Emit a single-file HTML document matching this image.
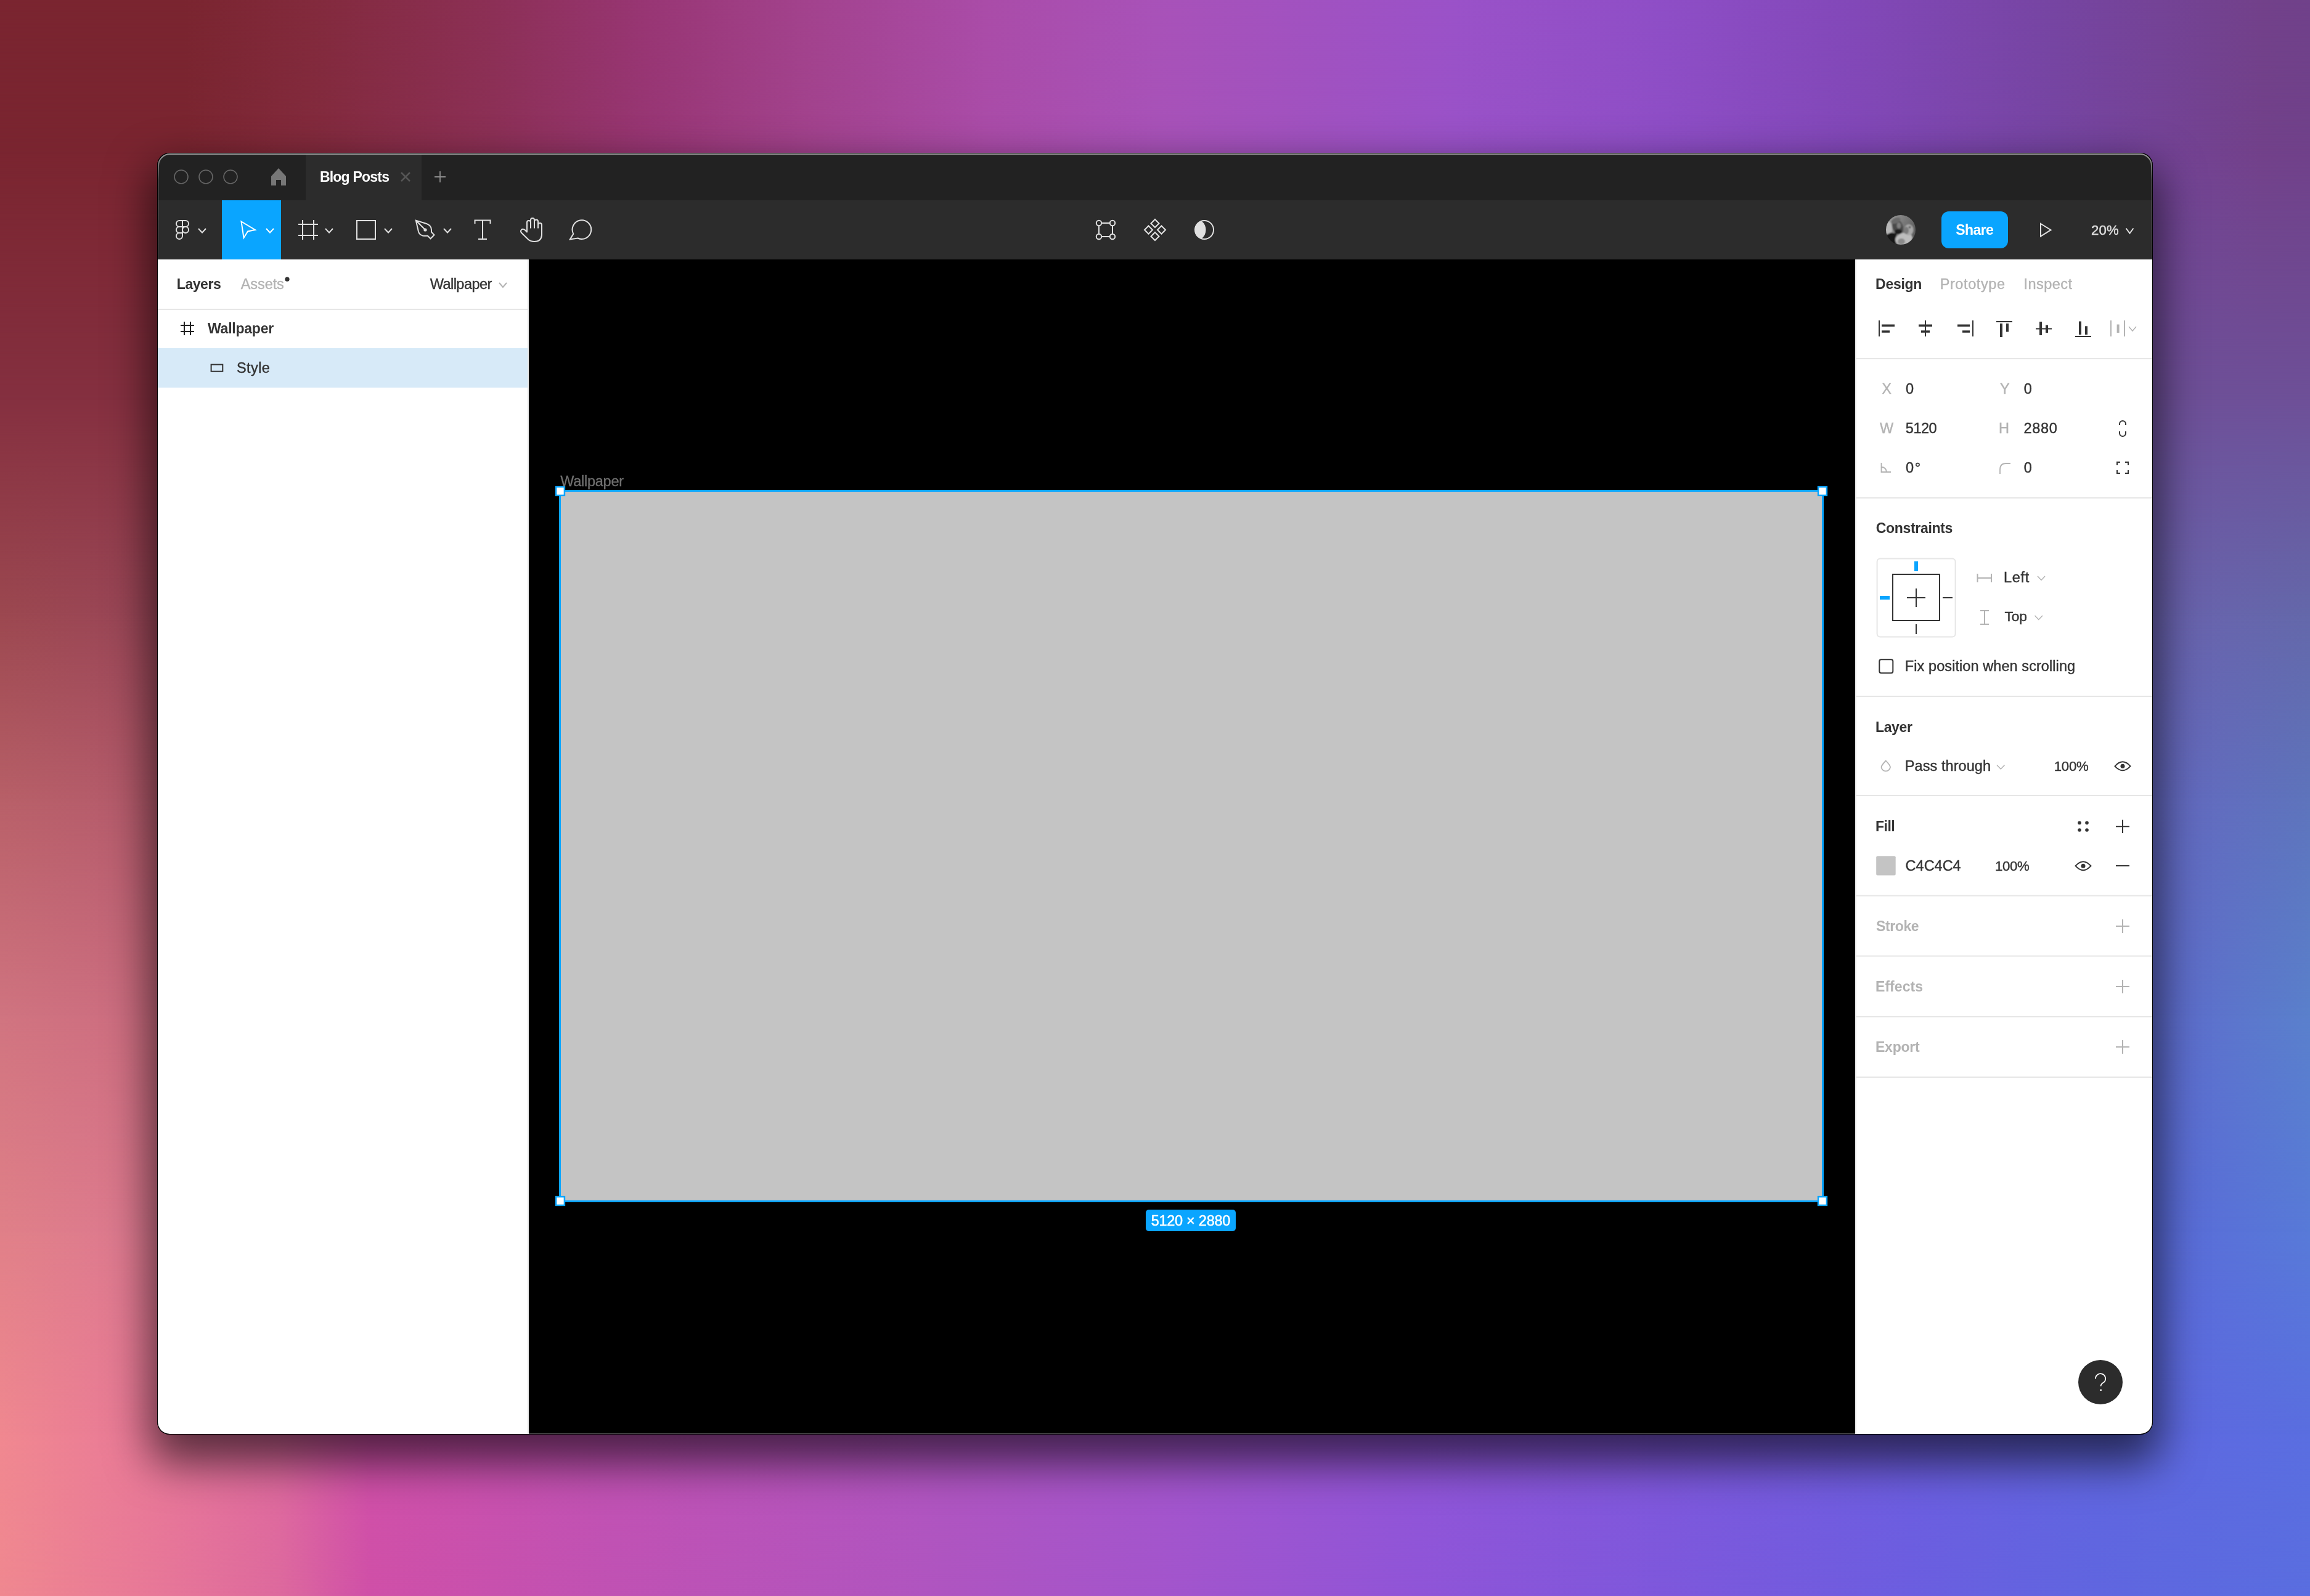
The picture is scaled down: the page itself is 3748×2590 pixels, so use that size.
<!DOCTYPE html>
<html><head><meta charset="utf-8"><style>
html,body{margin:0;padding:0;width:3748px;height:2590px;overflow:hidden;background:#9a50b8}
.band{position:absolute;left:0;width:3748px}
.ov{position:absolute;left:0;top:0;width:100%;height:100%;-webkit-mask-image:linear-gradient(180deg,#000 0%,rgba(0,0,0,0) 100%);mask-image:linear-gradient(180deg,#000 0%,rgba(0,0,0,0) 100%)}
#shadow{position:absolute;left:255px;top:248px;width:3238px;height:2080px;border-radius:20px;background:#000;box-shadow:0 35px 70px 12px rgba(0,0,0,0.6)}
svg{position:absolute;left:0;top:0;will-change:transform}
text{font-family:"Liberation Sans",sans-serif}
</style></head><body>
<div class="band" style="top:0px;height:250px;background:linear-gradient(90deg,#7a2530 0.000%,#7a2530 8.004%,#822a3c 13.340%,#8c3056 21.345%,#983674 28.015%,#a2428c 34.685%,#aa4ca8 42.689%,#a852b8 50.027%,#9a52c8 62.967%,#8e4ec6 72.038%,#8248b8 80.283%,#7645a2 88.954%,#72418a 97.919%,#70418a 100.000%)"><div class="ov" style="background:linear-gradient(90deg,#7a2530 0.000%,#7a2530 8.004%,#822a3c 13.340%,#8c3056 21.345%,#983674 28.015%,#a2428c 34.685%,#aa4ca8 42.689%,#a852b8 50.027%,#9a52c8 62.967%,#8e4ec6 72.038%,#8248b8 80.283%,#7645a2 88.954%,#72418a 97.919%,#70418a 100.000%)"></div></div>
<div class="band" style="top:250px;height:400px;background:linear-gradient(90deg,#853040 0.000%,#853040 6.830%,#6e5098 93.170%,#6e5098 100.000%)"><div class="ov" style="background:linear-gradient(90deg,#7a2530 0.000%,#7a2530 8.004%,#822a3c 13.340%,#8c3056 21.345%,#983674 28.015%,#a2428c 34.685%,#aa4ca8 42.689%,#a852b8 50.027%,#9a52c8 62.967%,#8e4ec6 72.038%,#8248b8 80.283%,#7645a2 88.954%,#72418a 97.919%,#70418a 100.000%)"></div></div>
<div class="band" style="top:650px;height:350px;background:linear-gradient(90deg,#9c4850 0.000%,#9a4658 6.830%,#6a62ae 93.170%,#6468aa 100.000%)"><div class="ov" style="background:linear-gradient(90deg,#853040 0.000%,#853040 6.830%,#6e5098 93.170%,#6e5098 100.000%)"></div></div>
<div class="band" style="top:1000px;height:300px;background:linear-gradient(90deg,#b86068 0.000%,#b45a6c 6.830%,#6468c0 93.170%,#5e74bc 100.000%)"><div class="ov" style="background:linear-gradient(90deg,#9c4850 0.000%,#9a4658 6.830%,#6a62ae 93.170%,#6468aa 100.000%)"></div></div>
<div class="band" style="top:1300px;height:350px;background:linear-gradient(90deg,#d07480 0.000%,#cc6c80 6.830%,#5e6acc 93.170%,#5a80cc 100.000%)"><div class="ov" style="background:linear-gradient(90deg,#b86068 0.000%,#b45a6c 6.830%,#6468c0 93.170%,#5e74bc 100.000%)"></div></div>
<div class="band" style="top:1650px;height:350px;background:linear-gradient(90deg,#e08088 0.000%,#dc7890 6.830%,#5a6ad8 93.170%,#587ad8 100.000%)"><div class="ov" style="background:linear-gradient(90deg,#d07480 0.000%,#cc6c80 6.830%,#5e6acc 93.170%,#5a80cc 100.000%)"></div></div>
<div class="band" style="top:2000px;height:330px;background:linear-gradient(90deg,#f08890 0.000%,#e87898 6.670%,#de6a9e 12.006%,#d050a8 16.009%,#c052b4 26.681%,#b055c0 40.021%,#a455cc 50.027%,#9055d8 61.366%,#7e58dc 72.038%,#6c5ee0 82.711%,#6066e0 90.715%,#5a6ee0 100.000%)"><div class="ov" style="background:linear-gradient(90deg,#e08088 0.000%,#dc7890 6.830%,#5a6ad8 93.170%,#587ad8 100.000%)"></div></div>
<div class="band" style="top:2330px;height:260px;background:linear-gradient(90deg,#f08890 0.000%,#e87898 6.670%,#de6a9e 12.006%,#d050a8 16.009%,#c052b4 26.681%,#b055c0 40.021%,#a455cc 50.027%,#9055d8 61.366%,#7e58dc 72.038%,#6c5ee0 82.711%,#6066e0 90.715%,#5a6ee0 100.000%)"><div class="ov" style="background:linear-gradient(90deg,#f08890 0.000%,#e87898 6.670%,#de6a9e 12.006%,#d050a8 16.009%,#c052b4 26.681%,#b055c0 40.021%,#a455cc 50.027%,#9055d8 61.366%,#7e58dc 72.038%,#6c5ee0 82.711%,#6066e0 90.715%,#5a6ee0 100.000%)"></div></div>
<div id="shadow"></div>
<svg width="3748" height="2590" viewBox="0 0 3748 2590">
<defs>
<clipPath id="winclip"><rect x="256" y="249" width="3236" height="2078" rx="19.5"/></clipPath>
<linearGradient id="hl" x1="0" y1="0" x2="0" y2="1"><stop offset="0" stop-color="#9a9a9a" stop-opacity="1"/><stop offset="0.02" stop-color="#9a9a9a" stop-opacity="0.25"/><stop offset="0.1" stop-color="#9a9a9a" stop-opacity="0"/></linearGradient>
<linearGradient id="avg" x1="0" y1="0" x2="1" y2="0.5"><stop offset="0" stop-color="#a8a8a8"/><stop offset="0.55" stop-color="#7c7c7c"/><stop offset="1" stop-color="#5c5c5c"/></linearGradient>
<clipPath id="avclip"><circle cx="0" cy="0" r="24"/></clipPath>
<filter id="avblur" x="-20%" y="-20%" width="140%" height="140%"><feGaussianBlur stdDeviation="0.9"/></filter>
</defs>
<g clip-path="url(#winclip)">
<rect x="255.00" y="248.00" width="3238.00" height="77.00" fill="#222222"/>
<rect x="496.00" y="251.00" width="188.00" height="74.00" fill="#2c2c2c"/>
<rect x="255.00" y="325.00" width="3238.00" height="96.00" fill="#2c2c2c"/>
<rect x="360.00" y="325.00" width="96.00" height="96.00" fill="#0aa5ff"/>
<rect x="255.00" y="421.00" width="603.00" height="1907.00" fill="#ffffff"/>
<rect x="856.00" y="421.00" width="2.00" height="1907.00" fill="#e6e6e6"/>
<rect x="858.00" y="421.00" width="2152.00" height="1907.00" fill="#000000"/>
<rect x="858.00" y="2326.00" width="2152.00" height="1.00" fill="#4a4a4a"/>
<rect x="3010.00" y="421.00" width="483.00" height="1907.00" fill="#ffffff"/>
<rect x="3010.00" y="421.00" width="2.00" height="1907.00" fill="#e6e6e6"/>
<circle cx="294" cy="287" r="11" fill="none" stroke="#666666" stroke-width="1.6"/>
<circle cx="334" cy="287" r="11" fill="none" stroke="#666666" stroke-width="1.6"/>
<circle cx="374" cy="287" r="11" fill="none" stroke="#666666" stroke-width="1.6"/>
<path d="M440 286L452 273L464 286L464 301L456 301L456 292L448 292L448 301L440 301Z" fill="#777777"/>
<text x="518.96" y="295.20" font-size="23" font-weight="bold" fill="#ffffff" letter-spacing="-0.793">Blog Posts</text>
<path d="M651 280L665 294M665 280L651 294" fill="none" stroke="#555555" stroke-width="2.6"/>
<path d="M714 278V296M705 287H723" fill="none" stroke="#8c8c8c" stroke-width="1.8"/>
<g fill="none" stroke="#e0e0e0" stroke-width="2">
<path d="M291 358H296V368H291A5 5 0 0 1 291 358Z"/>
<path d="M296 358H301A5 5 0 0 1 301 368H296Z"/>
<path d="M291 368H296V378H291A5 5 0 0 1 291 368Z"/>
<circle cx="301" cy="373" r="5"/>
<path d="M291 378H296V383A5 5 0 1 1 291 378Z"/>
</g>
<path d="M322.00 371.00L328.00 377.50L334.00 371.00" fill="none" stroke="#e0e0e0" stroke-width="2" stroke-linejoin="miter"/>
<path d="M391.5 359.5L414 373L402 375.5L395.5 386Z" fill="none" stroke="#ffffff" stroke-width="2" stroke-linejoin="miter"/>
<path d="M432.00 371.00L438.00 377.50L444.00 371.00" fill="none" stroke="#ffffff" stroke-width="2" stroke-linejoin="miter"/>
<path d="M491 357V389M509 357V389M484 364H516M484 382H516" fill="none" stroke="#e0e0e0" stroke-width="2"/>
<path d="M528.00 371.00L534.00 377.50L540.00 371.00" fill="none" stroke="#e0e0e0" stroke-width="2" stroke-linejoin="miter"/>
<rect x="579.00" y="358.00" width="30.00" height="30.00" fill="none" stroke="#e0e0e0" stroke-width="2"/>
<path d="M624.00 371.00L630.00 377.50L636.00 371.00" fill="none" stroke="#e0e0e0" stroke-width="2" stroke-linejoin="miter"/>
<path d="M674.8 357.8L692 363Q700 366 700 373V376.5L704.5 381.3L698.5 387.3L693.8 382.5Q690 383.2 686 382.5Q680.5 381 679 376ZM675.5 358.5L690 373" fill="none" stroke="#e0e0e0" stroke-width="2" stroke-linejoin="miter"/>
<circle cx="690" cy="373" r="2.6" fill="#e0e0e0"/>
<path d="M720.00 371.00L726.00 377.50L732.00 371.00" fill="none" stroke="#e0e0e0" stroke-width="2" stroke-linejoin="miter"/>
<path d="M770.5 363V357.5H795.5V363M783 357.5V388M776 388H790" fill="none" stroke="#e0e0e0" stroke-width="2"/>
<path d="M873 370.5V359.5Q873 356.5 870 356.5Q867 356.5 867 359.5V370.5M867 370.5V357Q867 354 864 354Q861 354 861 357V370.5M861 370.5V361Q861 358 858 358Q855 358 855 361V376.5L851.5 373Q848.5 370.5 846 372.8Q843.8 375.3 846.3 378L857 388.5Q861 392 867 392Q879 392 879 380V365Q879 362 876 362Q873 362 873 365V370.5" fill="none" stroke="#e0e0e0" stroke-width="2" stroke-linejoin="round"/>
<path d="M930.3 379.6A15.3 15.3 0 1 1 937.5 386.5L924.8 388.4Z" fill="none" stroke="#e0e0e0" stroke-width="2" stroke-linejoin="miter"/>
<g fill="none" stroke="#e0e0e0" stroke-width="2">
<circle cx="1783" cy="362" r="4.2"/>
<circle cx="1805" cy="362" r="4.2"/>
<circle cx="1783" cy="384" r="4.2"/>
<circle cx="1805" cy="384" r="4.2"/>
<path d="M1787.2 362H1800.8M1787.2 384H1800.8M1783 366.2V379.8M1805 366.2V379.8"/>
<path d="M1874.0 356.0L1880.5 362.5L1874.0 369.0L1867.5 362.5Z"/>
<path d="M1863.5 366.5L1870.0 373.0L1863.5 379.5L1857.0 373.0Z"/>
<path d="M1884.5 366.5L1891.0 373.0L1884.5 379.5L1878.0 373.0Z"/>
<path d="M1874.0 377.0L1880.5 383.5L1874.0 390.0L1867.5 383.5Z"/>
<circle cx="1954" cy="373" r="15"/>
</g>
<path d="M1949.5 358.7A15 15 0 0 0 1949.5 387.3A18 18 0 0 0 1949.5 358.7Z" fill="#e0e0e0"/>
<g transform="translate(3084 373)"><g clip-path="url(#avclip)"><g filter="url(#avblur)"><rect x="-26" y="-26" width="52" height="52" fill="url(#avg)"/><ellipse cx="-20" cy="0" rx="6" ry="14" fill="#b8b8b8"/><ellipse cx="-5" cy="-5" rx="8.5" ry="12.5" transform="rotate(-20 -5 -5)" fill="#4a4a4a"/><ellipse cx="-8" cy="-15" rx="8" ry="4.5" transform="rotate(-25 -8 -15)" fill="#6a6a6a"/><ellipse cx="-3" cy="-7" rx="3.5" ry="5" fill="#7e7e7e"/><ellipse cx="-4" cy="3" rx="6" ry="4" fill="#1e1e1e"/><path d="M-26 9L-16 4.5L-6 6L-9 14L-6 26L-26 26Z" fill="#161616"/><ellipse cx="5" cy="15" rx="14" ry="10" transform="rotate(-15 5 15)" fill="#bdbdbd"/><ellipse cx="1" cy="19" rx="6" ry="5" fill="#8a8a8a"/><ellipse cx="13" cy="0" rx="7.5" ry="9" fill="#a8a8a8"/><ellipse cx="9" cy="1" rx="4" ry="6" fill="#7a7a7a"/><circle cx="14.7" cy="-4.2" r="1.5" fill="#1e1e1e"/></g></g></g>
<rect x="3150" y="343" width="108" height="60" rx="12" fill="#0aa5ff"/>
<text x="3173.34" y="380.60" font-size="23" font-weight="bold" fill="#ffffff" letter-spacing="-0.619">Share</text>
<path d="M3311 363L3327.5 373.2L3311 383.5Z" fill="none" stroke="#e0e0e0" stroke-width="2"/>
<text x="3392.88" y="380.60" font-size="22.2" font-weight="normal" fill="#e0e0e0" letter-spacing="0.238" stroke="#e0e0e0" stroke-width="0.4">20%</text>
<path d="M3449.50 370.50L3455.50 378.50L3461.50 370.50" fill="none" stroke="#e0e0e0" stroke-width="2" stroke-linejoin="miter"/>
<text x="286.86" y="469.20" font-size="23" font-weight="bold" fill="#333333" letter-spacing="-0.457">Layers</text>
<text x="390.75" y="469.20" font-size="23.5" font-weight="normal" fill="#b3b3b3" letter-spacing="-0.086" stroke="#b3b3b3" stroke-width="0.35">Assets</text>
<circle cx="466" cy="453.2" r="3.6" fill="#333333"/>
<text x="697.70" y="469.20" font-size="23.5" font-weight="normal" fill="#333333" letter-spacing="-0.538" stroke="#333333" stroke-width="0.4">Wallpaper</text>
<path d="M810.00 459.00L816.00 466.00L822.00 459.00" fill="none" stroke="#b3b3b3" stroke-width="2" stroke-linejoin="miter"/>
<rect x="256.00" y="501.00" width="600.00" height="2.00" fill="#e6e6e6"/>
<path d="M299 522V544M309 522V544M293 528H315M293 538H315" fill="none" stroke="#222222" stroke-width="2"/>
<text x="336.98" y="541.00" font-size="23" font-weight="bold" fill="#333333" letter-spacing="-0.230">Wallpaper</text>
<rect x="256.00" y="565.00" width="600.00" height="64.00" fill="#d7eaf8"/>
<rect x="342.60" y="591.60" width="18.70" height="11.10" fill="none" stroke="#333333" stroke-width="2"/>
<text x="383.93" y="604.70" font-size="23.5" font-weight="normal" fill="#333333" letter-spacing="0.417" stroke="#333333" stroke-width="0.4">Style</text>
<rect x="910.00" y="798.00" width="2046.00" height="1150.00" fill="#c4c4c4"/>
<rect x="908.50" y="796.50" width="2049.00" height="1153.00" fill="none" stroke="#0aa5ff" stroke-width="3"/>
<rect x="902.10" y="790.10" width="13.80" height="13.80" fill="#ffffff" stroke="#0aa5ff" stroke-width="2.5"/>
<rect x="2950.10" y="790.10" width="13.80" height="13.80" fill="#ffffff" stroke="#0aa5ff" stroke-width="2.5"/>
<rect x="902.10" y="1942.10" width="13.80" height="13.80" fill="#ffffff" stroke="#0aa5ff" stroke-width="2.5"/>
<rect x="2950.10" y="1942.10" width="13.80" height="13.80" fill="#ffffff" stroke="#0aa5ff" stroke-width="2.5"/>
<text x="909.30" y="788.80" font-size="23.5" font-weight="normal" fill="#707070" letter-spacing="-0.275" stroke="#707070" stroke-width="0.3">Wallpaper</text>
<rect x="1859" y="1963" width="146" height="35" rx="5" fill="#0aa5ff"/>
<text x="1867.66" y="1988.90" font-size="23.5" font-weight="normal" fill="#ffffff" letter-spacing="-0.268" stroke="#ffffff" stroke-width="0.5">5120 × 2880</text>
<text x="3043.06" y="469.30" font-size="23" font-weight="bold" fill="#333333" letter-spacing="-0.263">Design</text>
<text x="3147.67" y="469.30" font-size="23.5" font-weight="normal" fill="#b3b3b3" letter-spacing="0.598" stroke="#b3b3b3" stroke-width="0.35">Prototype</text>
<text x="3283.53" y="469.30" font-size="23.5" font-weight="normal" fill="#b3b3b3" letter-spacing="0.446" stroke="#b3b3b3" stroke-width="0.35">Inspect</text>
<rect x="3053.00" y="526.50" width="21.00" height="3.50" fill="#333333"/>
<rect x="3053.00" y="536.30" width="13.00" height="3.50" fill="#333333"/>
<rect x="3113.00" y="526.50" width="22.00" height="3.50" fill="#333333"/>
<rect x="3117.00" y="536.30" width="14.00" height="3.50" fill="#333333"/>
<rect x="3176.00" y="526.50" width="20.00" height="3.50" fill="#333333"/>
<rect x="3184.00" y="536.30" width="12.00" height="3.50" fill="#333333"/>
<rect x="3245.00" y="525.00" width="4.00" height="22.00" fill="#333333"/>
<rect x="3255.00" y="525.00" width="4.00" height="13.50" fill="#333333"/>
<rect x="3309.00" y="522.00" width="4.00" height="22.00" fill="#333333"/>
<rect x="3319.00" y="527.50" width="4.00" height="12.50" fill="#333333"/>
<rect x="3373.00" y="521.50" width="4.00" height="21.50" fill="#333333"/>
<rect x="3383.00" y="529.30" width="4.00" height="13.70" fill="#333333"/>
<path d="M3049 520V546M3124 520V546M3201 520V546M3239 522H3265M3303 533.5H3329M3367 546H3393" fill="none" stroke="#333333" stroke-width="2"/>
<path d="M3425 520V546M3447 520V546" fill="none" stroke="#b3b3b3" stroke-width="2"/>
<rect x="3434.60" y="526.50" width="4.00" height="13.50" fill="#b3b3b3"/>
<path d="M3454.00 530.00L3460.00 537.00L3466.00 530.00" fill="none" stroke="#b3b3b3" stroke-width="1.5" stroke-linejoin="miter"/>
<rect x="3012.00" y="581.00" width="481.00" height="2.00" fill="#e6e6e6"/>
<text x="3053.38" y="639.00" font-size="23" font-weight="normal" fill="#b3b3b3" letter-spacing="0.000" stroke="#b3b3b3" stroke-width="0.4">X</text>
<text x="3091.88" y="639.00" font-size="23.5" font-weight="normal" fill="#333333" letter-spacing="0.000" stroke="#333333" stroke-width="0.4">0</text>
<text x="3244.88" y="639.00" font-size="23.5" font-weight="normal" fill="#b3b3b3" letter-spacing="0.000" stroke="#b3b3b3" stroke-width="0.4">Y</text>
<text x="3283.68" y="639.00" font-size="23.5" font-weight="normal" fill="#333333" letter-spacing="0.000" stroke="#333333" stroke-width="0.4">0</text>
<text x="3049.90" y="703.30" font-size="23.5" font-weight="normal" fill="#b3b3b3" letter-spacing="0.000" stroke="#b3b3b3" stroke-width="0.4">W</text>
<text x="3091.86" y="703.30" font-size="23.5" font-weight="normal" fill="#333333" letter-spacing="-0.506" stroke="#333333" stroke-width="0.4">5120</text>
<text x="3243.07" y="703.30" font-size="23.5" font-weight="normal" fill="#b3b3b3" letter-spacing="0.000" stroke="#b3b3b3" stroke-width="0.4">H</text>
<text x="3283.42" y="703.30" font-size="23.5" font-weight="normal" fill="#333333" letter-spacing="0.741" stroke="#333333" stroke-width="0.4">2880</text>
<path d="M3439 690V688A5 5 0 0 1 3449 688V690M3439 700V703A5 5 0 0 0 3449 703V700" fill="none" stroke="#333333" stroke-width="2"/>
<path d="M3052.5 751V766H3068M3052.5 758Q3060 758 3061 766" fill="none" stroke="#b3b3b3" stroke-width="1.8"/>
<text x="3091.88" y="766.70" font-size="23.5" font-weight="normal" fill="#333333" letter-spacing="1.762" stroke="#333333" stroke-width="0.4">0°</text>
<path d="M3245 769V762Q3245 752 3255 752H3262" fill="none" stroke="#b3b3b3" stroke-width="1.8"/>
<text x="3283.68" y="766.70" font-size="23.5" font-weight="normal" fill="#333333" letter-spacing="0.000" stroke="#333333" stroke-width="0.4">0</text>
<path d="M3435 755V750H3440M3448 750H3453V755M3453 763V768H3448M3440 768H3435V763" fill="none" stroke="#333333" stroke-width="2"/>
<rect x="3012.00" y="807.00" width="481.00" height="2.00" fill="#e6e6e6"/>
<text x="3043.66" y="864.70" font-size="23" font-weight="bold" fill="#333333" letter-spacing="-0.310">Constraints</text>
<rect x="3045.6" y="906.6" width="127" height="127" rx="5" fill="none" stroke="#e6e6e6" stroke-width="2"/>
<rect x="3071.00" y="932.00" width="76.00" height="75.00" fill="none" stroke="#333333" stroke-width="2"/>
<path d="M3109 955V985M3094 970H3124M3152 970H3168M3109 1013V1029" fill="none" stroke="#333333" stroke-width="2"/>
<rect x="3106.00" y="911.00" width="6.00" height="16.00" fill="#0aa5ff"/>
<rect x="3050.00" y="967.00" width="16.00" height="6.00" fill="#0aa5ff"/>
<path d="M3208.5 931V945M3231 931V945M3208.5 938H3231" fill="none" stroke="#b3b3b3" stroke-width="2"/>
<text x="3251.07" y="945.00" font-size="23.5" font-weight="normal" fill="#333333" letter-spacing="0.634" stroke="#333333" stroke-width="0.4">Left</text>
<path d="M3306.00 935.00L3312.00 941.50L3318.00 935.00" fill="none" stroke="#b3b3b3" stroke-width="1.5" stroke-linejoin="miter"/>
<path d="M3220 991V1013M3213 991H3227M3213 1013H3227" fill="none" stroke="#b3b3b3" stroke-width="2"/>
<text x="3252.49" y="1008.30" font-size="22.8" font-weight="normal" fill="#333333" letter-spacing="-0.159" stroke="#333333" stroke-width="0.4">Top</text>
<path d="M3301.50 999.00L3307.75 1005.50L3314.00 999.00" fill="none" stroke="#b3b3b3" stroke-width="1.5" stroke-linejoin="miter"/>
<rect x="3049.3" y="1070.3" width="22" height="22" rx="3" fill="none" stroke="#333333" stroke-width="2"/>
<text x="3090.87" y="1089.30" font-size="23.5" font-weight="normal" fill="#333333" letter-spacing="0.075" stroke="#333333" stroke-width="0.4">Fix position when scrolling</text>
<rect x="3012.00" y="1129.00" width="481.00" height="2.00" fill="#e6e6e6"/>
<text x="3043.06" y="1187.50" font-size="23" font-weight="bold" fill="#333333" letter-spacing="-0.397">Layer</text>
<path d="M3059.8 1234.5Q3052.5 1242 3052.5 1245A7.3 7.3 0 0 0 3067 1245Q3067 1242 3059.8 1234.5Z" fill="none" stroke="#b3b3b3" stroke-width="1.8"/>
<text x="3090.87" y="1250.70" font-size="23.5" font-weight="normal" fill="#333333" letter-spacing="0.062" stroke="#333333" stroke-width="0.4">Pass through</text>
<path d="M3240.00 1241.50L3246.25 1248.00L3252.50 1241.50" fill="none" stroke="#b3b3b3" stroke-width="1.5" stroke-linejoin="miter"/>
<text x="3332.81" y="1250.70" font-size="22.2" font-weight="normal" fill="#333333" letter-spacing="-0.299" stroke="#333333" stroke-width="0.4">100%</text>
<path d="M3431.5 1243.3Q3444.0 1229.3 3456.5 1243.3Q3444.0 1257.3 3431.5 1243.3Z" fill="none" stroke="#333333" stroke-width="2"/>
<circle cx="3444.0" cy="1243.3" r="3.5" fill="#333333"/>
<rect x="3012.00" y="1290.00" width="481.00" height="2.00" fill="#e6e6e6"/>
<text x="3043.06" y="1349.30" font-size="23" font-weight="bold" fill="#333333" letter-spacing="-0.551">Fill</text>
<circle cx="3374.0" cy="1335.3" r="2.8" fill="#333333"/>
<circle cx="3386.0" cy="1335.3" r="2.8" fill="#333333"/>
<circle cx="3374.0" cy="1347.0" r="2.8" fill="#333333"/>
<circle cx="3386.0" cy="1347.0" r="2.8" fill="#333333"/>
<path d="M3444 1330.5V1352M3433 1341.3H3455" fill="none" stroke="#333333" stroke-width="2"/>
<rect x="3044.2" y="1389.3" width="31.5" height="31.3" rx="2" fill="#c4c4c4"/>
<text x="3091.61" y="1413.00" font-size="23.5" font-weight="normal" fill="#333333" letter-spacing="-0.008" stroke="#333333" stroke-width="0.4">C4C4C4</text>
<text x="3236.91" y="1413.00" font-size="22.2" font-weight="normal" fill="#333333" letter-spacing="-0.299" stroke="#333333" stroke-width="0.4">100%</text>
<path d="M3367.5 1405.2Q3380.0 1391.2 3392.5 1405.2Q3380.0 1419.2 3367.5 1405.2Z" fill="none" stroke="#333333" stroke-width="2"/>
<circle cx="3380.0" cy="1405.2" r="3.5" fill="#333333"/>
<path d="M3433 1405H3455" fill="none" stroke="#333333" stroke-width="2"/>
<rect x="3012.00" y="1452.50" width="481.00" height="2.00" fill="#e6e6e6"/>
<text x="3043.94" y="1511.00" font-size="23" font-weight="bold" fill="#b3b3b3" letter-spacing="-0.387">Stroke</text>
<path d="M3444 1492V1514M3433 1503H3455" fill="none" stroke="#b3b3b3" stroke-width="2"/>
<rect x="3012.00" y="1550.50" width="481.00" height="2.00" fill="#e6e6e6"/>
<text x="3043.06" y="1609.30" font-size="23" font-weight="bold" fill="#b3b3b3" letter-spacing="0.032">Effects</text>
<path d="M3444 1590V1612M3433 1601H3455" fill="none" stroke="#b3b3b3" stroke-width="2"/>
<rect x="3012.00" y="1649.00" width="481.00" height="2.00" fill="#e6e6e6"/>
<text x="3043.06" y="1707.40" font-size="23" font-weight="bold" fill="#b3b3b3" letter-spacing="-0.264">Export</text>
<path d="M3444 1688V1710M3433 1699H3455" fill="none" stroke="#b3b3b3" stroke-width="2"/>
<rect x="3012.00" y="1747.00" width="481.00" height="2.00" fill="#e6e6e6"/>
<circle cx="3408" cy="2243" r="36" fill="#2c2c2c"/>
<path d="M3400 2237.5A8.1 8.1 0 1 1 3414.3 2242.5Q3408.5 2246 3408.5 2249.5" fill="none" stroke="#ffffff" stroke-width="1.8"/>
<rect x="3407.40" y="2254.60" width="2.40" height="2.40" fill="#ffffff"/>
</g>
<rect x="255.5" y="248.5" width="3237" height="2079" rx="20" fill="none" stroke="#000000" stroke-opacity="0.9" stroke-width="1"/>
<rect x="257" y="250" width="3234" height="2076" rx="19" fill="none" stroke="url(#hl)" stroke-width="2"/>
</svg>
</body></html>
